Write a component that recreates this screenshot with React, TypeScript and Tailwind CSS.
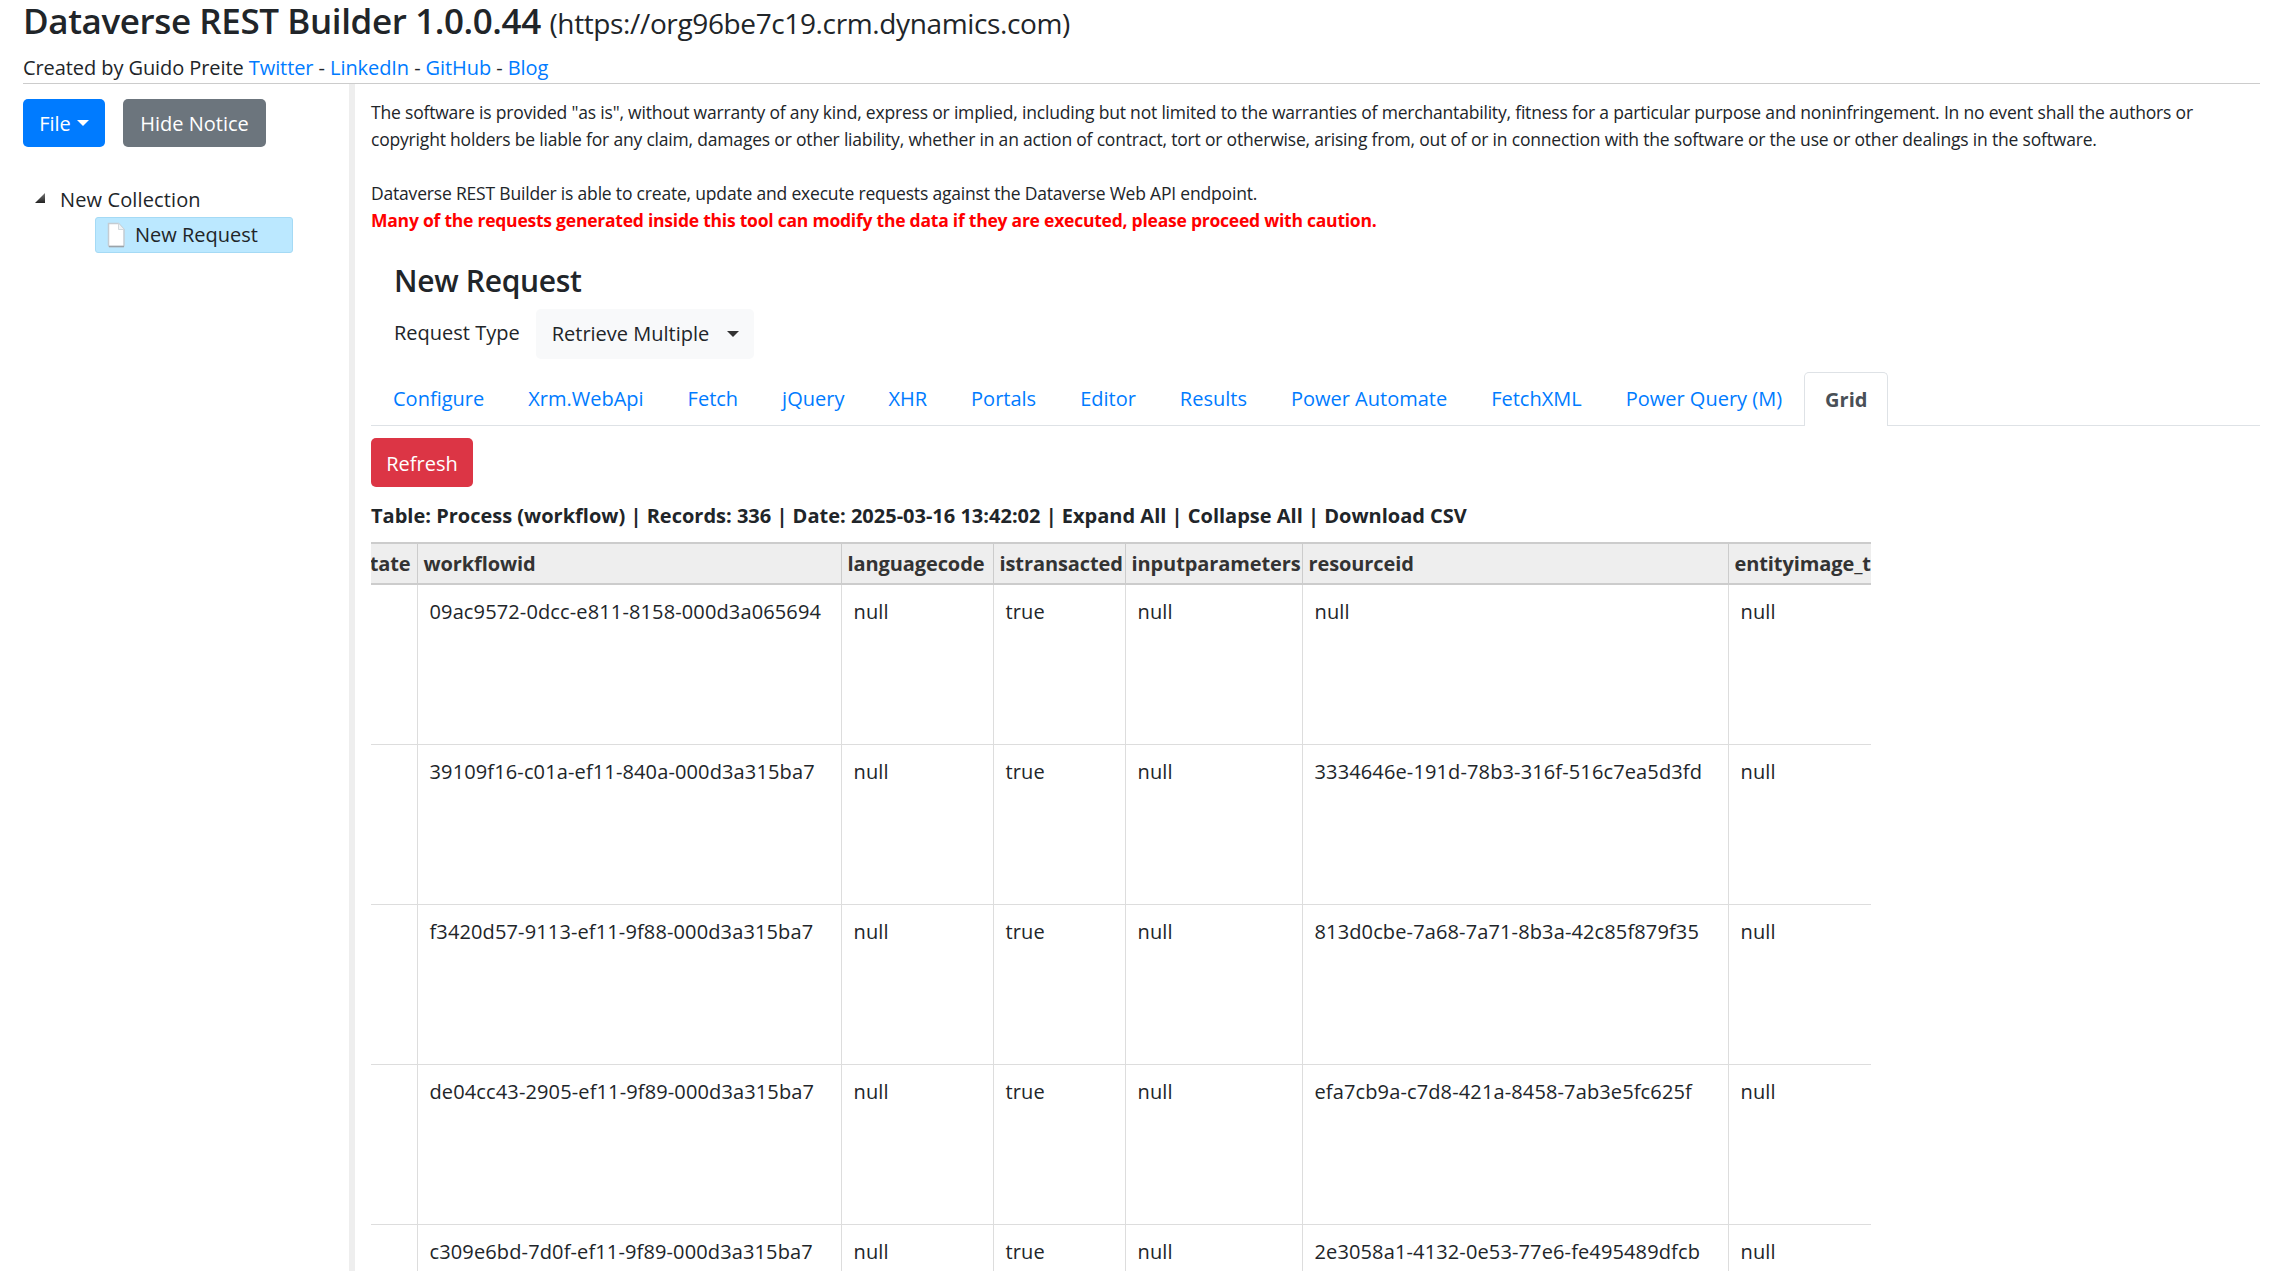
import React from "react";

const TABS = ["Configure", "Xrm.WebApi", "Fetch", "jQuery", "XHR", "Portals", "Editor", "Results", "Power Automate", "FetchXML", "Power Query (M)"];

const ROWS = [
  ["09ac9572-0dcc-e811-8158-000d3a065694", "null"],
  ["39109f16-c01a-ef11-840a-000d3a315ba7", "3334646e-191d-78b3-316f-516c7ea5d3fd"],
  ["f3420d57-9113-ef11-9f88-000d3a315ba7", "813d0cbe-7a68-7a71-8b3a-42c85f879f35"],
  ["de04cc43-2905-ef11-9f89-000d3a315ba7", "efa7cb9a-c7d8-421a-8458-7ab3e5fc625f"],
  ["c309e6bd-7d0f-ef11-9f89-000d3a315ba7", "2e3058a1-4132-0e53-77e6-fe495489dfcb"],
];

const HEAD_CELL = "h-[41px] border-t-2 border-b-2 border-l border-[#ccc] bg-[#eee] px-[6px] text-left font-bold tracking-[-0.1px] text-[#333] whitespace-nowrap overflow-hidden first:border-l-0";
const BODY_CELL = "h-[160px] border-b border-l border-[#ddd] pl-[12px] pt-[12px] align-top font-normal tracking-[0.13px] whitespace-nowrap overflow-hidden first:border-l-0";

function FileIcon() {
  return (
    <svg width="20" height="26" viewBox="0 0 20 26" className="shrink-0">
      <path d="M2.5 1.500h10l5.500 6v16a1 1 0 0 1-1 1H3.500a1 1 0 0 1-1-1z" fill="#fff" stroke="#c4ccd2" strokeWidth="1.500" />
      <path d="M12.500 1.500v6h5.500" fill="#f0f3f5" stroke="#d2d8dc" strokeWidth="1" />
      <path d="M3 24.500h15" stroke="#9aa3a9" strokeWidth="1.500" />
    </svg>
  );
}

function Sidebar() {
  return (
    <aside className="w-[349px] shrink-0 pl-[23px]">
      <div className="mt-[15px] flex gap-[18px]">
        <button className="flex h-[48px] w-[82px] items-center justify-center gap-[6px] rounded-[5px] bg-[#007bff] pt-[2px] text-white">
          File
          <span className="mt-[-2px] border-x-[6px] border-t-[6px] border-x-transparent border-t-white" />
        </button>
        <button className="h-[48px] w-[143px] rounded-[5px] bg-[#6c757d] pt-[2px] text-white">Hide Notice</button>
      </div>
      <div className="mt-[36px] flex h-[34px] items-center">
        <svg width="10" height="10" viewBox="0 0 10 10" className="ml-[12px] mb-[5px] shrink-0">
          <defs>
            <linearGradient id="twist" x1="0" y1="0" x2="0" y2="1">
              <stop offset="0" stopColor="#777" />
              <stop offset="1" stopColor="#222" />
            </linearGradient>
          </defs>
          <path d="M10 0v10H0z" fill="url(#twist)" />
        </svg>
        <span className="ml-[15px] tracking-[0.12px]">New Collection</span>
      </div>
      <div className="ml-[72px] flex h-[36px] w-[198px] items-center gap-[9px] rounded-[3px] border border-[#a5daf5] bg-[#bbe8ff] pl-[10px]">
        <FileIcon />
        New Request
      </div>
    </aside>
  );
}

function Notice() {
  return (
    <div className="text-[17.5px] leading-[27px] tracking-[-0.19px]">
      <p>
        The software is provided "as is", without warranty of any kind, express or implied, including but not limited to the warranties of merchantability, fitness for a particular purpose and noninfringement. In no event shall the authors or
        <br />
        copyright holders be liable for any claim, damages or other liability, whether in an action of contract, tort or otherwise, arising from, out of or in connection with the software or the use or other dealings in the software.
      </p>
      <p className="mt-[27px]">Dataverse REST Builder is able to create, update and execute requests against the Dataverse Web API endpoint.</p>
      <p className="font-bold tracking-[-0.23px] text-[#ff0000]">Many of the requests generated inside this tool can modify the data if they are executed, please proceed with caution.</p>
    </div>
  );
}

function Tabs() {
  return (
    <ul className="mt-[13px] flex h-[54px] border-b border-[#dee2e6]">
      {TABS.map((t) => (
        <li key={t} className="flex items-center px-[22px] text-[#007bff]">{t}</li>
      ))}
      <li className="-mb-px flex h-[54px] items-center rounded-t-[5px] border-x border-t border-[#dee2e6] bg-white px-[20px] font-bold text-[#495057]">Grid</li>
    </ul>
  );
}

function Grid() {
  return (
    <div className="mt-[12px] w-[1500px] overflow-hidden">
      <table className="w-[1500px] table-fixed border-collapse">
        <colgroup>
          <col className="w-[46px]" />
          <col className="w-[424px]" />
          <col className="w-[152px]" />
          <col className="w-[132px]" />
          <col className="w-[177px]" />
          <col className="w-[426px]" />
          <col className="w-[143px]" />
        </colgroup>
        <thead>
          <tr>
            <th className={HEAD_CELL}><div className="flex justify-end">state</div></th>
            <th className={HEAD_CELL}>workflowid</th>
            <th className={HEAD_CELL}>languagecode</th>
            <th className={HEAD_CELL}>istransacted</th>
            <th className={HEAD_CELL}>inputparameters</th>
            <th className={HEAD_CELL}>resourceid</th>
            <th className={HEAD_CELL}>entityimage_timestamp</th>
          </tr>
        </thead>
        <tbody>
          {ROWS.map(([id, res]) => (
            <tr key={id}>
              <td className={BODY_CELL} />
              <td className={BODY_CELL}>{id}</td>
              <td className={BODY_CELL}>null</td>
              <td className={BODY_CELL}>true</td>
              <td className={BODY_CELL}>null</td>
              <td className={BODY_CELL}>{res}</td>
              <td className={BODY_CELL}>null</td>
            </tr>
          ))}
        </tbody>
      </table>
    </div>
  );
}

export default function App() {
  return (
    <div className="h-screen overflow-hidden bg-white pl-[23px] pr-[26px] font-['Open_Sans','Noto_Sans',sans-serif] text-[20px] text-[#212529]">
      <header className="h-[84px] border-b border-[#ccc]">
        <h1 className="text-[35px] leading-[42px] font-semibold tracking-[-0.4px]">
          Dataverse REST Builder 1.0.0.44 <span className="text-[28px] font-normal tracking-[-0.37px]">(https://org96be7c19.crm.dynamics.com)</span>
        </h1>
        <p className="mt-[11px] leading-[26px] tracking-[-0.08px]">
          Created by Guido Preite <span className="text-[#007bff]">Twitter</span> - <span className="text-[#007bff]">LinkedIn</span> - <span className="text-[#007bff]">GitHub</span> - <span className="text-[#007bff]">Blog</span>
        </p>
      </header>
      <div className="-ml-[23px] flex">
        <Sidebar />
        <main className="min-h-[1187px] grow border-l-[6px] border-[#eee] pl-[16px] pt-[15px]">
          <Notice />
          <h2 className="mt-[27px] pl-[23px] text-[30px] leading-[40px] font-semibold tracking-[-0.3px]">New Request</h2>
          <div className="mt-[8px] flex items-center pl-[23px]">
            <span className="mb-[3px]">Request Type</span>
            <div className="ml-[16px] flex h-[50px] w-[218px] items-center rounded-[5px] bg-[#f8f9fa] pl-[16px]">
              Retrieve Multiple
              <span className="ml-[18px] border-x-[6px] border-t-[6px] border-x-transparent border-t-[#333]" />
            </div>
          </div>
          <Tabs />
          <button className="mt-[12px] h-[49px] w-[102px] rounded-[5px] bg-[#dc3545] pt-[2px] text-white">Refresh</button>
          <p className="mt-[15px] leading-[28px] font-bold tracking-[0px]">Table: Process (workflow) | Records: 336 | Date: 2025-03-16 13:42:02 | Expand All | Collapse All | Download CSV</p>
          <Grid />
        </main>
      </div>
    </div>
  );
}
